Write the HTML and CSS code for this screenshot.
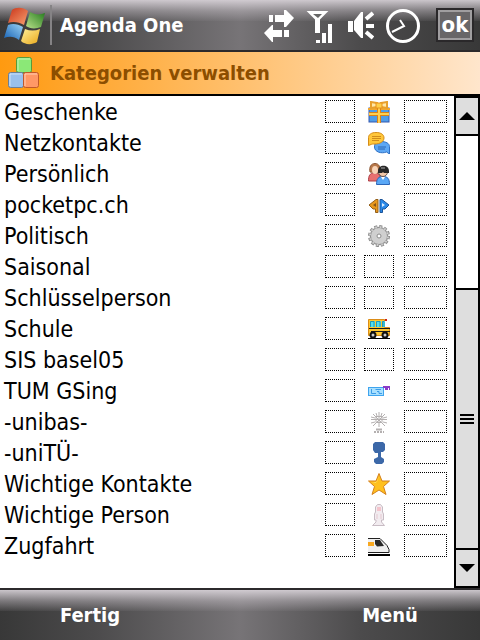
FILE: index.html
```
<!DOCTYPE html>
<html lang="de">
<head>
    <meta charset="UTF-8">
    <meta name="viewport" content="width=device-width, initial-scale=1.0">
    <title>Agenda One - Kategorien verwalten</title>
    <link rel="stylesheet" href="styles.css">
</head>
<body>
    <!-- Titelleiste -->
    <header class="titlebar">
        <button class="start-button" aria-label="Start">
            <svg width="44" height="40" viewBox="0 0 44 40">
                <defs>
                    <linearGradient id="red" x1="0" y1="0" x2="1" y2="1"><stop offset="0" stop-color="#c8341a"/><stop offset="1" stop-color="#f9a070"/></linearGradient>
                    <linearGradient id="green" x1="1" y1="0" x2="0" y2="1"><stop offset="0" stop-color="#237a1c"/><stop offset="1" stop-color="#b8e08a"/></linearGradient>
                    <linearGradient id="blue" x1="0" y1="1" x2="1" y2="0"><stop offset="0" stop-color="#1460b4"/><stop offset="1" stop-color="#9cd4f6"/></linearGradient>
                    <linearGradient id="yellow" x1="0" y1="0" x2="1" y2="1"><stop offset="0" stop-color="#fff09a"/><stop offset="1" stop-color="#eaa81a"/></linearGradient>
                </defs>
                <path fill="url(#red)" d="M8 5C12 2 19 2 24 6L20 20C15 17 9 16 4 18Z"/>
                <path fill="url(#green)" d="M26 7C31 10 36 10 41 8L37 22C32 24 26 24 22 21Z"/>
                <path fill="url(#blue)" d="M4 20C9 18 14 19 19 22L15 35C10 31 5 31 0 33Z"/>
                <path fill="url(#yellow)" d="M21 24C26 26 31 26 36 24L33 37C28 40 21 40 17 36Z"/>
            </svg>
        </button>
        <h1 class="app-title">Agenda One</h1>
        <div class="status-icons">
            <svg width="30" height="36" viewBox="1 0 30 36" fill="#fff">
                <path d="M6 8h4v7H6zM12 8h9V3h2l8 8-8 9h-2v-5h-9z"/>
                <path d="M26 23h-5v7h5zM19 23h-9v-5H9l-8 8 8 9h1v-5h9z"/>
            </svg>
            <svg width="28" height="36" viewBox="0 0 28 36">
                <path d="M3 5h17l-7 7v13h-3V12Z" fill="#fff" stroke="#fff" stroke-width="2"/>
                <path d="M7 7h9l-4 4z" fill="#666"/>
                <path d="M10 33h4v3h-4zM16 26h4v10h-4zM22 17h4v19h-4z" fill="#fff"/>
            </svg>
            <svg width="28" height="36" viewBox="0 0 28 36">
                <path d="M2 14h5v11H2zM8 14l7-9h2v26h-2l-7-8z" fill="#fff"/>
                <path d="M20 12l7-6M20 19h9M20 25l7 6" stroke="#fff" stroke-width="4"/>
            </svg>
            <svg width="34" height="36" viewBox="0 0 34 36" fill="none" stroke="#fff">
                <circle cx="17" cy="19" r="15.500" stroke-width="3"/>
                <path d="M14 13l4 6-12 6" stroke-width="2"/>
            </svg>
        </div>
        <button class="ok-button">ok</button>
    </header>

    <!-- Bereichsüberschrift -->
    <div class="section-head">
        <svg width="32" height="32" viewBox="0 0 32 32" stroke-width="1">
            <rect x="8.500" y=".5" width="15" height="15" rx="2" fill="#8be877" stroke="#5a9a3a"/>
            <rect x=".5" y="15.500" width="15" height="15" rx="2" fill="#99c0ec" stroke="#6a7f98"/>
            <rect x="15.500" y="15.500" width="15" height="15" rx="2" fill="#ff9866" stroke="#c0582a"/>
            <path d="M10 14V2h12M2 29V17h12M17 29V17h12" fill="none" stroke="#fff" stroke-opacity=".5"/>
        </svg>
        <h2 class="section-title">Kategorien verwalten</h2>
    </div>

    <main class="content">
        <div class="list">
            <table class="categories">
                <tbody>
                    <tr>
                        <td class="name">Geschenke</td>
                        <td><button class="box" aria-label="Farbe"></button></td>
                        <td class="symbol">
                            <svg class="icon" viewBox="0 0 22 22">
                                <rect x="1" y="7" width="20" height="14" fill="#4f9de8" stroke="#3458b0"/>
                                <path d="M0 8h22" stroke="#f0a830" stroke-width="2"/>
                                <path d="M1 13h20M11 7v15" stroke="#d98318" stroke-width="4"/>
                                <path d="M1 13h20M11 7v15" stroke="#ffd050" stroke-width="2"/>
                                <path d="M9 2L3 1v6l6-1zM13 2l6-1v6l-6-1z" fill="#ffe8a8" stroke="#e8a02c" stroke-width="2"/>
                                <rect x="8" y="2" width="6" height="5" fill="#ffd04a" stroke="#e8921c"/>
                            </svg>
                        </td>
                        <td><button class="box box-wide" aria-label="Kürzel"></button></td>
                    </tr>
                    <tr>
                        <td class="name">Netzkontakte</td>
                        <td><button class="box" aria-label="Farbe"></button></td>
                        <td class="symbol">
                            <svg class="icon" viewBox="0 0 22 22">
                                <path d="M13 9.500c5 0 8.500 2 8.500 5v7.500l-3-2c-5 2-12 0-12-5s3-5.500 6.500-5.500z" fill="#5da7f4" stroke="#2e70c4"/>
                                <path d="M10 15h8M10 17h7" stroke="#2d66b4"/>
                                <path d="M8 .500c5 0 8 2 8 5.500s-4 6-9 6c-2 0-3 0-4 .500l-2.500 1V5.500c0-3 3-5 7.500-5z" fill="#ffc73a" stroke="#d58c18"/>
                                <path d="M4 4.500h9M4 6.500h9M4 8.500h7" stroke="#d08c1a"/>
                            </svg>
                        </td>
                        <td><button class="box box-wide" aria-label="Kürzel"></button></td>
                    </tr>
                    <tr>
                        <td class="name">Persönlich</td>
                        <td><button class="box" aria-label="Farbe"></button></td>
                        <td class="symbol">
                            <svg class="icon" viewBox="0 0 22 22">
                                <path d="M.500 18c0-5 1-8 6-8s6 3 6 8z" fill="#e87070" stroke="#ad3e46"/>
                                <path d="M2 9c-1-5 1-8.500 5-8.500S13 4 11 10z" fill="#b8794a" stroke="#8c5634"/>
                                <ellipse cx="7" cy="7" rx="3" ry="4" fill="#f8d4b8"/>
                                <path d="M8.500 21.500c0-6 2-8 6.500-8s6.500 2 6.500 8z" fill="#5aa8f6" stroke="#2c66b8"/>
                                <circle cx="15" cy="9" r="4.500" fill="#f4c8a8" stroke="#6a5850"/>
                                <path d="M10 8c0-7 11-7 11 0v2h-5l-1-1-1 1h-4z" fill="#282828"/>
                                <path d="M13 5h4" stroke="#aaa"/>
                                <path d="M13 14l2 3 2-3z" fill="#fff"/>
                            </svg>
                        </td>
                        <td><button class="box box-wide" aria-label="Kürzel"></button></td>
                    </tr>
                    <tr>
                        <td class="name">pocketpc.ch</td>
                        <td><button class="box" aria-label="Farbe"></button></td>
                        <td class="symbol">
                            <svg class="icon" viewBox="0 0 22 22">
                                <path d="M1 11l7-5.500h2v13H7.500V15H5z" fill="#e8981c" stroke="#94601a"/>
                                <path d="M21 11l-7-5.500h-2v13h2.500V15H17z" fill="#2888e8" stroke="#1c5498"/>
                                <path d="M5 11l3-2v4z" fill="#865519"/>
                                <path d="M17 11l-3-2v4z" fill="#d8ebff"/>
                            </svg>
                        </td>
                        <td><button class="box box-wide" aria-label="Kürzel"></button></td>
                    </tr>
                    <tr>
                        <td class="name">Politisch</td>
                        <td><button class="box" aria-label="Farbe"></button></td>
                        <td class="symbol">
                            <svg class="icon" viewBox="0 0 22 22">
                                <circle cx="11" cy="11" r="9.500" fill="#ccc" stroke="#8c8c8c" stroke-width="3" stroke-dasharray="3 1.970"/>
                                <circle cx="11" cy="11" r="8.500" fill="#cfcfcf" stroke="#8c8c8c"/>
                                <circle cx="11" cy="11" r="9" fill="none" stroke="#ccc" stroke-width="2" stroke-dasharray="1.700 3.010" stroke-dashoffset="-.6"/>
                                <circle cx="11" cy="11" r="2" fill="#fff" stroke="#8c8c8c"/>
                            </svg>
                        </td>
                        <td><button class="box box-wide" aria-label="Kürzel"></button></td>
                    </tr>
                    <tr>
                        <td class="name">Saisonal</td>
                        <td><button class="box" aria-label="Farbe"></button></td>
                        <td class="symbol"><button class="box" aria-label="Symbol"></button></td>
                        <td><button class="box box-wide" aria-label="Kürzel"></button></td>
                    </tr>
                    <tr>
                        <td class="name">Schlüsselperson</td>
                        <td><button class="box" aria-label="Farbe"></button></td>
                        <td class="symbol"><button class="box" aria-label="Symbol"></button></td>
                        <td><button class="box box-wide" aria-label="Kürzel"></button></td>
                    </tr>
                    <tr>
                        <td class="name">Schule</td>
                        <td><button class="box" aria-label="Farbe"></button></td>
                        <td class="symbol">
                            <svg class="icon" viewBox="0 0 22 22">
                                <path d="M.500 17.500v-16h16v8h5v8z" fill="#ffc830" stroke="#dc8c18"/>
                                <path d="M2 3h5v6H2zM8 3h5v6H8zM14 3h3v6h-3z" fill="#50e0f0"/>
                                <path d="M2.500 9V3.500H6V9M8.500 9V3.500H12V9M14.500 9V3.500H16V9" fill="none" stroke="#2298b8"/>
                                <path d="M1 10.500h21M3 13.500h19" stroke="#1c1c1c"/>
                                <path d="M17 1h2v2h-2z" fill="#cc2018"/>
                                <path d="M0 20.500h22" stroke="#000"/>
                                <circle cx="5" cy="17" r="2.500" fill="#ccc" stroke="#111" stroke-width="2"/>
                                <circle cx="17" cy="17" r="2.500" fill="#ccc" stroke="#111" stroke-width="2"/>
                            </svg>
                        </td>
                        <td><button class="box box-wide" aria-label="Kürzel"></button></td>
                    </tr>
                    <tr>
                        <td class="name">SIS basel05</td>
                        <td><button class="box" aria-label="Farbe"></button></td>
                        <td class="symbol"><button class="box" aria-label="Symbol"></button></td>
                        <td><button class="box box-wide" aria-label="Kürzel"></button></td>
                    </tr>
                    <tr>
                        <td class="name">TUM GSing</td>
                        <td><button class="box" aria-label="Farbe"></button></td>
                        <td class="symbol">
                            <svg class="icon" viewBox="0 0 22 22">
                                <rect x=".5" y="7.500" width="15" height="8" fill="#a8e0ff" stroke="#3fa4ee"/>
                                <path d="M3.500 9v4.500H8M13 9.500H7.500M9 11.500h2v2h3" stroke="#3c9ce8" fill="none"/>
                                <path d="M15 7h3v2h2M19 7h3v3" stroke="#8a3cc8" stroke-width="2" fill="none"/>
                            </svg>
                        </td>
                        <td><button class="box box-wide" aria-label="Kürzel"></button></td>
                    </tr>
                    <tr>
                        <td class="name">-unibas-</td>
                        <td><button class="box" aria-label="Farbe"></button></td>
                        <td class="symbol">
                            <svg class="icon" viewBox="0 0 22 22" fill="none" stroke="#b4b0b0">
                                <path d="M11 1v15M3 8.500h16M5 3l12 12M17 3L5 15M8 2l1 3M14 2l-1 3M3 6l4 1M19 6l-4 1M3 12l4-1M19 12l-4-1"/>
                                <path d="M8 5.500h6v6H8z"/>
                                <path d="M8 18.500h6" stroke-width="2"/>
                                <path d="M6 21h10" stroke-width="2" stroke-dasharray="2 1"/>
                            </svg>
                        </td>
                        <td><button class="box box-wide" aria-label="Kürzel"></button></td>
                    </tr>
                    <tr>
                        <td class="name">-uniTÜ-</td>
                        <td><button class="box" aria-label="Farbe"></button></td>
                        <td class="symbol">
                            <svg class="icon" viewBox="0 0 22 22">
                                <path d="M7 0h8l2 2v6l-2 2h-2v5l3 2v3l-2 2H8l-2-2v-3l4-2v-4H7L5 8V2z" fill="#3c68a8"/>
                            </svg>
                        </td>
                        <td><button class="box box-wide" aria-label="Kürzel"></button></td>
                    </tr>
                    <tr>
                        <td class="name">Wichtige Kontakte</td>
                        <td><button class="box" aria-label="Farbe"></button></td>
                        <td class="symbol">
                            <svg class="icon" viewBox="0 0 22 22">
                                <path d="M11 .500l3 7.500h7.500l-6 5.500 2.500 8-7-4.500-7 4.500 2.500-8L.500 8H8z" fill="#ffc01e" stroke="#d4801c"/>
                                <path d="M11 3L9 9H4l4 1z" fill="#ffe06a"/>
                            </svg>
                        </td>
                        <td><button class="box box-wide" aria-label="Kürzel"></button></td>
                    </tr>
                    <tr>
                        <td class="name">Wichtige Person</td>
                        <td><button class="box" aria-label="Farbe"></button></td>
                        <td class="symbol">
                            <svg class="icon" viewBox="0 0 22 22">
                                <path d="M7.500 8V3l2-2.500h3l2 2.500v5l1 2v6h-2v2l3 3.500h-12L8 18v-2H6.500v-6z" fill="#f2ecf0" stroke="#c8bcc4"/>
                                <path d="M9 3h4v4H9z" fill="#f4c4cc"/>
                                <path d="M9 10v5M13 10v5" stroke="#e4c8d0"/>
                            </svg>
                        </td>
                        <td><button class="box box-wide" aria-label="Kürzel"></button></td>
                    </tr>
                    <tr>
                        <td class="name">Zugfahrt</td>
                        <td><button class="box" aria-label="Farbe"></button></td>
                        <td class="symbol">
                            <svg class="icon" viewBox="0 0 22 22">
                                <path d="M0 3.500h12l7 7 2 4v3H0" fill="#efefef" stroke="#222"/>
                                <path d="M0 7h6v4H0z" fill="#f8a820"/>
                                <path d="M7 5h5l4 6-7 .500-2-2.500z" fill="#282828"/>
                                <path d="M0 20h22" stroke="#000" stroke-width="2"/>
                            </svg>
                        </td>
                        <td><button class="box box-wide" aria-label="Kürzel"></button></td>
                    </tr>
                </tbody>
            </table>
        </div>

        <!-- Bildlaufleiste -->
        <div class="scrollbar">
            <button class="scroll-button" aria-label="Nach oben">
                <svg width="16" height="8" viewBox="0 0 16 8"><path d="M8 0l8 8H0z"/></svg>
            </button>
            <div class="scroll-track"></div>
            <div class="scroll-thumb"><span class="grip"></span></div>
            <button class="scroll-button" aria-label="Nach unten">
                <svg width="16" height="8" viewBox="0 0 16 8"><path d="M0 0h16L8 8z"/></svg>
            </button>
        </div>
    </main>

    <!-- Softkeys -->
    <footer class="softkeys">
        <button class="softkey">Fertig</button>
        <button class="softkey">Menü</button>
    </footer>
</body>
</html>
```
FILE: styles.css
```
/* Reset */
* {
    margin: 0;
    padding: 0;
    box-sizing: border-box;
}

:root {
    --line: #2c2a2c;
    --scroll: #dedede;
    --gloss: linear-gradient(to bottom, rgba(218, 212, 218, 0.9) 0, rgba(190, 184, 190, 0.5) 11px, rgba(150, 146, 150, 0.1) 21px, transparent 21px);
    --metal: linear-gradient(to right, #383838 0%, #4c4b4c 20%, #777477 50%, #4c4b4c 75%, #383838 100%);
}

body {
    font-family: "DejaVu Sans Condensed", "DejaVu Sans", Tahoma, sans-serif;
    background: #fff;
    color: #000;
    min-height: 100vh;
    display: flex;
    flex-direction: column;
}

button {
    font: inherit;
    color: inherit;
    background: none;
    border: none;
    cursor: pointer;
}

svg {
    display: block;
}

/* Titelleiste */
.titlebar {
    display: flex;
    align-items: center;
    height: 52px;
    padding-right: 6px;
    border-bottom: 2px solid var(--line);
    background: var(--gloss), var(--metal);
    color: #fff;
}

.start-button {
    padding: 0 2px 0 4px;
    border-right: 2px solid #858385;
}

.app-title {
    flex: 1;
    padding-left: 8px;
    font-size: 20px;
    line-height: 28px;
}

.status-icons {
    display: flex;
    align-items: center;
    gap: 12px;
}

.ok-button {
    width: 38px;
    height: 34px;
    margin-left: 16px;
    border: 2px solid #2a282a;
    background: #686668;
    box-shadow: inset 0 0 0 2px #a09ea0;
    font-size: 22px;
    font-weight: bold;
    line-height: 28px;
}

/* Bereichsüberschrift */
.section-head {
    display: flex;
    align-items: center;
    gap: 10px;
    height: 44px;
    padding-left: 8px;
    border-bottom: 2px solid #000;
    background: linear-gradient(to right, #ff9a10, #ffe6cc);
}

.section-title {
    color: #8c4e00;
    font-size: 20px;
    line-height: 28px;
}

/* Liste */
.content {
    flex: 1;
    display: flex;
}

.list {
    flex: 1;
}

.categories {
    width: 100%;
    border-collapse: collapse;
}

.categories td {
    width: 39px;
    height: 31px;
    vertical-align: middle;
}

.categories .symbol {
    width: 40px;
}

.categories td:last-child {
    width: 50px;
}

.categories .name {
    width: auto;
    padding: 2px 0 0 4px;
    font-size: 23px;
    line-height: 29px;
}

.box {
    display: block;
    width: 30px;
    height: 23px;
    border: 1px dotted #000;
}

.box-wide {
    width: 43px;
}

.icon {
    width: 22px;
    height: 22px;
    margin-left: 4px;
}

/* Bildlaufleiste */
.scrollbar {
    display: flex;
    flex-direction: column;
    width: 26px;
    border: 2px solid #000;
}

.scroll-button {
    display: flex;
    align-items: center;
    justify-content: center;
    height: 36px;
    background: var(--scroll);
}

.scroll-track {
    flex: 154;
    border-top: 2px solid #000;
}

.scroll-thumb {
    flex: 262;
    display: flex;
    align-items: center;
    justify-content: center;
    border-top: 2px solid #000;
    border-bottom: 2px solid #000;
    background: var(--scroll);
}

.grip {
    width: 14px;
    height: 10px;
    background: repeating-linear-gradient(to bottom, #000 0, #000 2px, transparent 2px, transparent 4px);
}

/* Softkeys */
.softkeys {
    display: flex;
    justify-content: space-between;
    height: 52px;
    border-top: 2px solid var(--line);
    background: var(--gloss), var(--metal);
    color: #fff;
}

.softkey {
    width: 180px;
    font-size: 20px;
    font-weight: bold;
    line-height: 28px;
}
```
